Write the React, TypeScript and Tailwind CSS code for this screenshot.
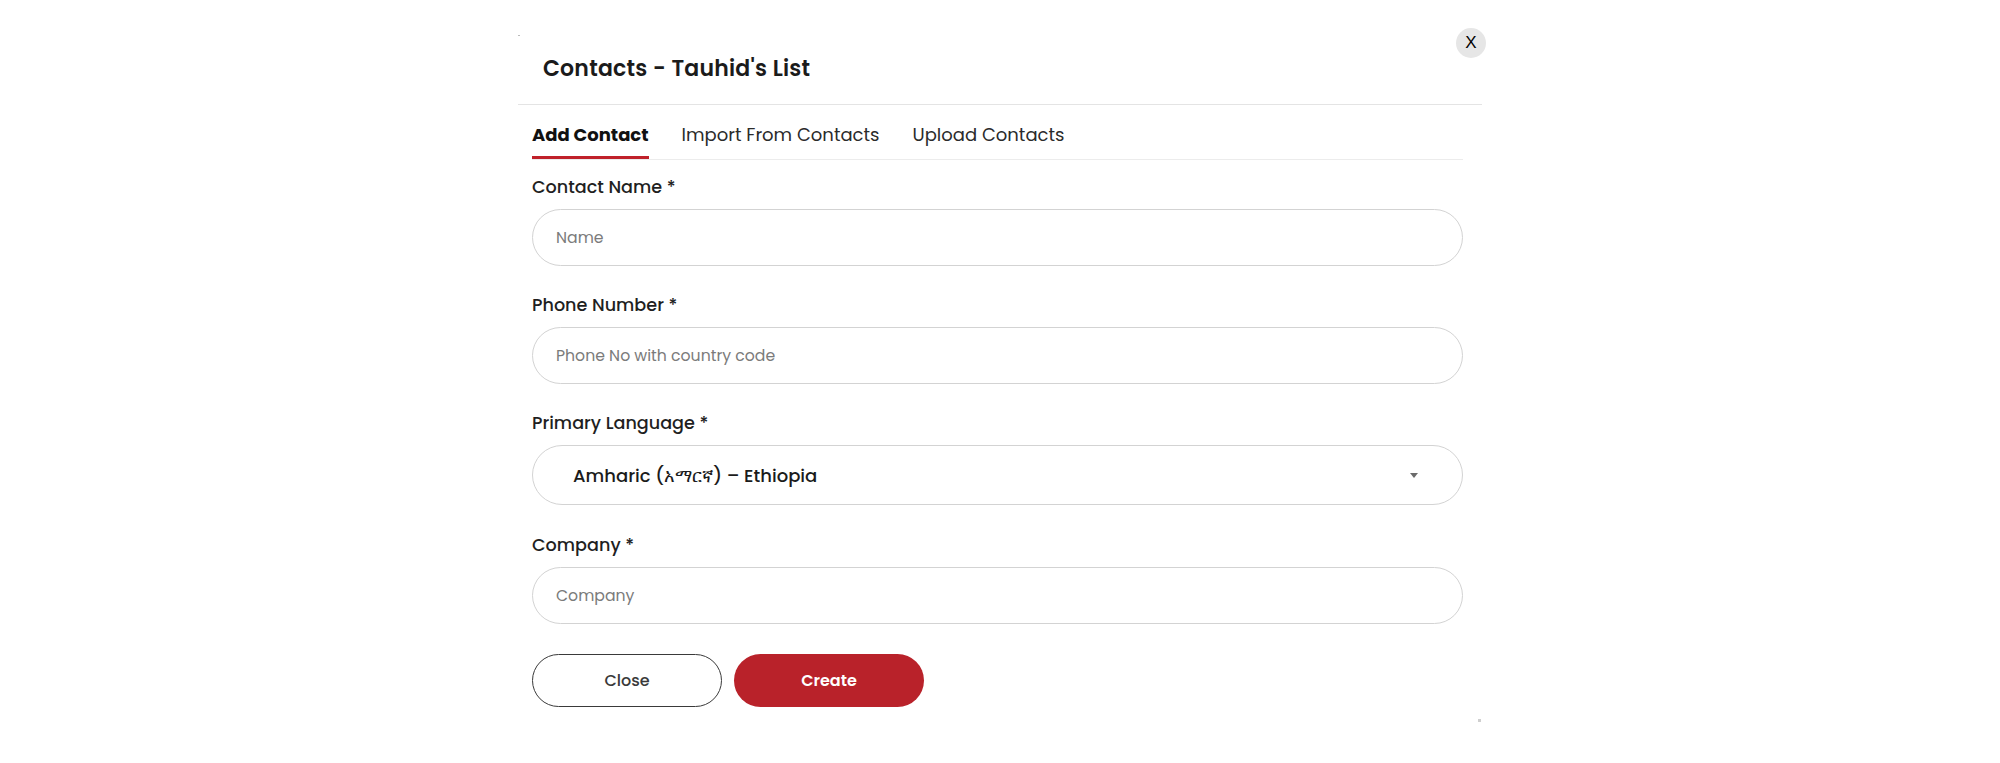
import { useState } from 'react';

const tabs = ['Add Contact', 'Import From Contacts', 'Upload Contacts'];

const Label = ({ children }: { children: React.ReactNode }) => (
    <label className="block pt-[2px] text-[17.6px] leading-[27px] font-medium text-[#1f1f1f] mb-[8px]">{children}</label>
);

const TextField = ({ placeholder }: { placeholder: string }) => (
    <input
        placeholder={placeholder}
        className="w-full h-[57px] rounded-full border border-[#d3d3d3] px-[23px] text-[15.7px] text-[#222] placeholder:text-[#7b7b7b] outline-none bg-white"
    />
);

const App = () => {
    const [active, setActive] = useState(0);

    return (
        <div className="w-full h-[763px] bg-white font-['Poppins','Inter',sans-serif] flex justify-center pt-[29px]">
            <div className="relative w-[964px] h-[695px]">
                <span className="absolute left-0 top-[6px] w-[2px] h-[1px] bg-[#bbb]" />
                <span className="absolute right-[1px] bottom-[2px] w-[3px] h-[3px] bg-[#cfcfcf]" />

                <div className="h-[76px] flex items-center pt-[4px] px-[25px] border-b border-[#e4e4e4]">
                    <h2 className="text-[22px] font-semibold text-[#1b1b1b] tracking-[0.01em]">Contacts - Tauhid's List</h2>
                </div>
                <button className="absolute right-[-4px] top-[-1px] w-[30px] h-[30px] rounded-full bg-[#e6e6e6] flex items-center justify-center text-[17px] text-black font-['Liberation_Sans',sans-serif]">
                    X
                </button>

                <div className="pl-[14px] pr-[19px]">
                    <div className="flex gap-[33px] border-b border-[#ececec]">
                        {tabs.map((t, i) => (
                            <button
                                key={t}
                                onClick={() => setActive(i)}
                                className={`pt-[16px] pb-[8px] text-[18px] leading-[27px] border-b-[3px] ${i === active ? 'font-bold text-[#111] border-[#c0212a]' : 'font-normal text-[#2b2b2b] border-transparent'}`}
                            >
                                {t}
                            </button>
                        ))}
                    </div>

                    <form className="pt-[12px]" onSubmit={(e) => e.preventDefault()}>
                        <div>
                            <Label>Contact Name *</Label>
                            <TextField placeholder="Name" />
                        </div>
                        <div className="mt-[24px]">
                            <Label>Phone Number *</Label>
                            <TextField placeholder="Phone No with country code" />
                        </div>
                        <div className="mt-[24px]">
                            <Label>Primary Language *</Label>
                            <div className="relative h-[60px] rounded-full border border-[#d3d3d3] flex items-center pl-[40px] pr-[44px]">
                                <span className="text-[18px] font-medium text-[#1b1b1b]">Amharic (አማርኛ) – Ethiopia</span>
                                <svg className="ml-auto" width="8" height="5" viewBox="0 0 8 5">
                                    <path d="M0 0h8L4 5z" fill="#6b6b6b" />
                                </svg>
                            </div>
                        </div>
                        <div className="mt-[25px]">
                            <Label>Company *</Label>
                            <TextField placeholder="Company" />
                        </div>

                        <div className="flex gap-[12px] mt-[30px]">
                            <button type="button" className="w-[190px] h-[53px] rounded-full border border-[#3a3a3a] text-[16px] font-medium text-[#3a3a3a]">
                                Close
                            </button>
                            <button type="submit" className="w-[190px] h-[53px] rounded-full bg-[#b9222a] text-[16px] font-semibold text-white">
                                Create
                            </button>
                        </div>
                    </form>
                </div>
            </div>
        </div>
    );
};

export default App;
